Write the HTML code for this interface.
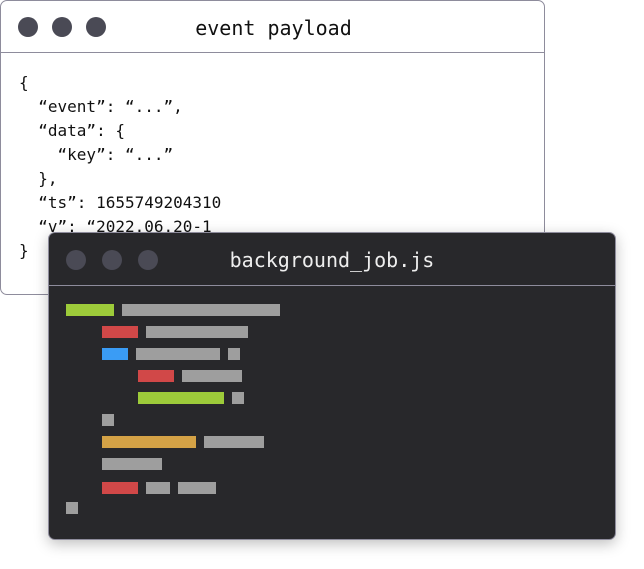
<!DOCTYPE html>
<html><head><meta charset="utf-8"><style>
html,body{margin:0;padding:0;background:#fff;width:644px;height:569px;overflow:hidden;position:relative;font-family:"DejaVu Sans Mono","Liberation Mono",monospace}
.w1{position:absolute;left:0;top:0;width:543px;height:293px;border:1.5px solid #8e8c9c;border-radius:7px;background:#fff;box-sizing:content-box}
.w1 .hd{height:51px;border-bottom:1.5px solid #8e8c9c;position:relative}
.dot{position:absolute;width:20px;height:20px;border-radius:50%;background:#4a4a55}
.t{position:absolute;font-size:20px;color:#111;white-space:pre;line-height:24px}
pre{position:absolute;margin:0;left:18px;top:70px;font-family:"DejaVu Sans Mono","Liberation Mono",monospace;font-size:16px;line-height:24px;color:#111}
.w2{position:absolute;left:48px;top:232px;width:566px;height:306px;border:1.5px solid #8e8c9c;border-radius:7px;background:#28282b;box-shadow:0 4px 14px rgba(0,0,0,.25)}
.w2 .hd{height:52px;border-bottom:1.5px solid #8e8c9c;position:relative}
.b{position:absolute;height:12px}
.g{background:#9dcb3a}.r{background:#d14848}.bl{background:#3a9cf5}.o{background:#d4a246}.gr{background:#9e9e9e}
</style></head><body>
<div class="w1"><div class="hd">
<div class="dot" style="left:17px;top:16px"></div><div class="dot" style="left:51px;top:16px"></div><div class="dot" style="left:85px;top:16px"></div>
<div class="t" style="left:0;width:545px;text-align:center;top:15px">event payload</div></div>
<pre>{
  “event”: “...”,
  “data”: {
    “key”: “...”
  },
  “ts”: 1655749204310
  “v”: “2022.06.20-1
}</pre></div>
<div class="w2"><div class="hd">
<div class="dot" style="left:17px;top:17px"></div><div class="dot" style="left:53px;top:17px"></div><div class="dot" style="left:89px;top:17px"></div>
<div class="t" style="left:0;width:566px;text-align:center;top:15px;color:#eee">background_job.js</div></div></div>
<div class="b g" style="left:66px;width:48px;top:304px"></div><div class="b gr" style="left:122px;width:158px;top:304px"></div>
<div class="b r" style="left:102px;width:36px;top:326px"></div><div class="b gr" style="left:146px;width:102px;top:326px"></div>
<div class="b bl" style="left:102px;width:26px;top:348px"></div><div class="b gr" style="left:136px;width:84px;top:348px"></div><div class="b gr" style="left:228px;width:12px;top:348px"></div>
<div class="b r" style="left:138px;width:36px;top:370px"></div><div class="b gr" style="left:182px;width:60px;top:370px"></div>
<div class="b g" style="left:138px;width:86px;top:392px"></div><div class="b gr" style="left:232px;width:12px;top:392px"></div>
<div class="b gr" style="left:102px;width:12px;top:414px"></div>
<div class="b o" style="left:102px;width:94px;top:436px"></div><div class="b gr" style="left:204px;width:60px;top:436px"></div>
<div class="b gr" style="left:102px;width:60px;top:458px"></div>
<div class="b r" style="left:102px;width:36px;top:482px"></div><div class="b gr" style="left:146px;width:24px;top:482px"></div><div class="b gr" style="left:178px;width:38px;top:482px"></div>
<div class="b gr" style="left:66px;width:12px;top:502px"></div>
</body></html>
